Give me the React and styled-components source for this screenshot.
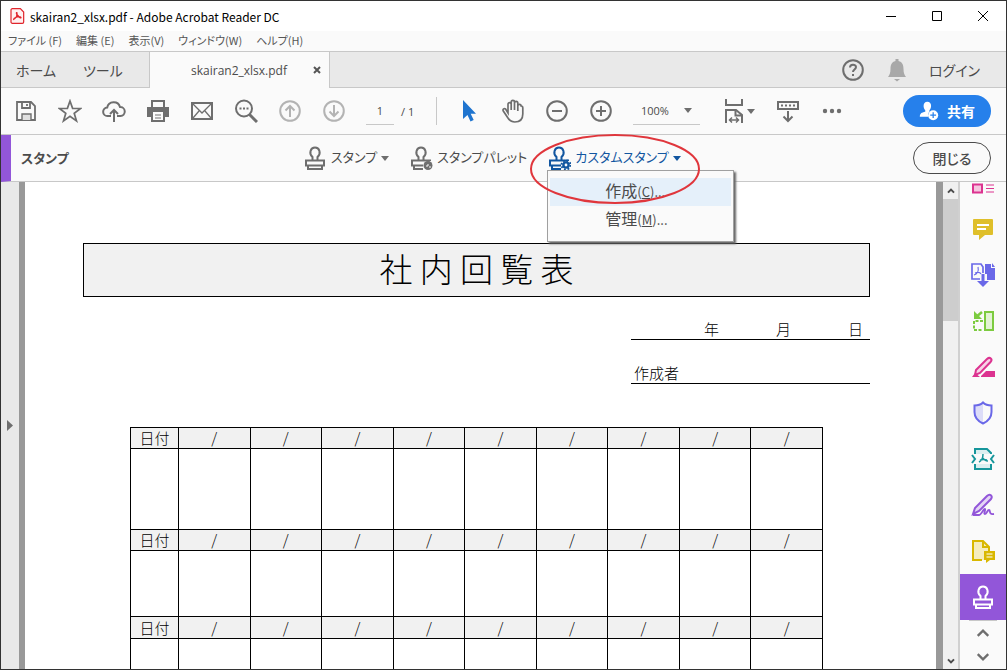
import styled, { createGlobalStyle } from "styled-components";

const GlobalStyle = createGlobalStyle`
  * {
    box-sizing: border-box;
  }

  body {
    margin: 0;
    color: #4b4b4b;
    font-family: "Noto Sans CJK JP", sans-serif;
    font-size: 12px;
    font-feature-settings: "palt";
  }

  button, input, select {
    margin: 0;
    padding: 0;
    border: 0;
    background: none;
    color: inherit;
    font: inherit;
    font-feature-settings: inherit;
  }

  svg {
    display: block;
    flex: none;
  }
`;

const Window = styled.div`
  display: flex;
  flex-direction: column;
  height: 100vh;
  border: 1px solid #333;
  background: #fafafa;
  overflow: hidden;
`;

const TitleBar = styled.header`
  display: flex;
  flex: none;
  align-items: center;
  height: 30px;
  padding: 0 0 0 8px;
  background: #fff;
  color: #000;
`;

const TitleText = styled.h1`
  flex: 1;
  margin: 0 0 0 5px;
  font-size: 12px;
  font-weight: 400;
`;

const WindowButton = styled.button`
  display: flex;
  align-items: center;
  justify-content: center;
  width: 46px;
  height: 30px;
`;

const MenuBar = styled.nav`
  display: flex;
  flex: none;
  align-items: center;
  gap: 14px;
  height: 20px;
  padding: 0 7px 2px;
  color: #555;
  font-size: 11px;
`;

const TabBar = styled.div`
  display: flex;
  flex: none;
  height: 37px;
  border-top: 1px solid #c8c8c8;
  background: #e9e9e9;
`;

const TabGroup = styled.div`
  display: flex;
  align-items: center;
  gap: ${({ $gap }) => $gap}px;
  width: ${({ $width }) => $width};
  flex: ${({ $grow }) => ($grow ? 1 : "none")};
  justify-content: ${({ $grow }) => ($grow ? "flex-end" : "flex-start")};
  padding: 0 ${({ $grow }) => ($grow ? 26 : 15)}px;
  border-bottom: 1px solid #c8c8c8;
  font-size: 14px;

  svg {
    color: #6e6e6e;
  }
`;

const FileTab = styled.div`
  display: flex;
  align-items: center;
  width: 181px;
  padding: 0 8px 0 41px;
  border: solid #c8c8c8;
  border-width: 0 1px;
  background: #fafafa;
  font-family: "Open Sans", sans-serif;

  button:first-child {
    flex: 1;
    text-align: left;
  }
`;

const Toolbar = styled.div`
  display: flex;
  flex: none;
  align-items: center;
  height: 47px;
  padding: 0 15px 0 3px;
  border-bottom: 1px solid #c8c8c8;
`;

const ToolButton = styled.button`
  display: flex;
  align-items: center;
  justify-content: center;
  gap: 1px;
  width: ${({ $wide }) => ($wide ? 56 : 44)}px;
  height: 44px;
  color: ${({ $color }) => $color || "#6e6e6e"};

  &:disabled {
    color: #b3b3b3;
  }
`;

const PageBox = styled.div`
  display: flex;
  align-items: center;
  gap: 7px;
  height: 28px;
  width: 71px;
  margin: 0 10px;
  border-right: 1px solid #c8c8c8;
  font-family: "Open Sans", sans-serif;
  font-size: 11px;

  input {
    width: 28px;
    height: 28px;
    border-bottom: 1px solid #c8c8c8;
    text-align: center;
  }
`;

const ZoomBox = styled.label`
  display: flex;
  align-items: center;
  width: 67px;
  height: 28px;
  margin: 0 10px;
  padding: 0 8px;
  border-bottom: 1px solid #c8c8c8;
  font-family: "Open Sans", sans-serif;
  font-size: 11px;

  select {
    flex: 1;
    min-width: 0;
    appearance: none;
  }

  svg {
    color: #6e6e6e;
  }
`;

const PillButton = styled.button`
  display: flex;
  align-items: center;
  justify-content: center;
  gap: 8px;
  width: ${({ $primary }) => ($primary ? 88 : 78)}px;
  height: 32px;
  margin-left: auto;
  border: ${({ $primary }) => ($primary ? "0" : "1px solid #4b4b4b")};
  border-radius: 16px;
  background: ${({ $primary }) => ($primary ? "#2680eb" : "transparent")};
  color: ${({ $primary }) => ($primary ? "#fff" : "#4b4b4b")};
  font-size: 14px;
  font-weight: ${({ $primary }) => ($primary ? 700 : 500)};
`;

const StampBar = styled.div`
  display: flex;
  flex: none;
  align-items: center;
  height: 47px;
  padding-right: 15px;
  border-bottom: 1px solid #c8c8c8;
  border-left: 10px solid #9256d9;
`;

const StampTitle = styled.h2`
  width: 292px;
  margin: 0;
  padding: 0 0 2px 10px;
  font-size: 13px;
  font-weight: 700;
`;

const StampTools = styled.div`
  display: flex;
  align-items: center;
  gap: 20px;
`;

const StampButton = styled.button`
  display: flex;
  align-items: center;
  gap: 4px;
  height: 32px;
  color: ${({ $open }) => ($open ? "#1256a0" : "#4b4b4b")};
  font-size: 13px;
  white-space: nowrap;

  svg {
    color: ${({ $open }) => ($open ? "#1256a0" : "#6e6e6e")};
  }
`;

const StampLabel = styled.span`
  padding-bottom: 3px;
`;

const MenuAnchor = styled.div`
  position: relative;
`;

const DropMenu = styled.div`
  position: absolute;
  top: 28px;
  left: 0;
  z-index: 1;
  width: 187px;
  padding: 7px 2px;
  border: 1px solid #a0a0a0;
  background: #fafafa;
  box-shadow: 2px 2px 2px #666;
`;

const DropItem = styled.button`
  display: block;
  width: 100%;
  height: 28px;
  padding: 0 0 3px 55px;
  background: ${({ $active }) => ($active ? "#e5f0fa" : "transparent")};
  font-size: 16px;
  line-height: 25px;
  text-align: left;

  small {
    font-size: 13px;
  }
`;

const Highlight = styled.svg`
  position: absolute;
  top: -8px;
  left: -18px;
  z-index: 2;
  pointer-events: none;
`;

const Workspace = styled.div`
  display: flex;
  flex: 1;
  min-height: 0;
`;

const PaneToggle = styled.button`
  display: flex;
  flex: none;
  align-items: center;
  justify-content: center;
  width: 18px;
  background: #e9e9e9;
`;

const Canvas = styled.main`
  flex: 1;
  min-width: 0;
  border: solid #999;
  border-width: 0 7px 0 6px;
  background: #fff;
  overflow: hidden;
`;

const Paper = styled.article`
  padding: 61px 66px 0 58px;
  color: #000;
  font-weight: 300;
  font-size: 15px;
  line-height: 20px;
`;

const PaperTitle = styled.h3`
  margin: 0;
  padding-bottom: 4px;
  border: 1px solid #000;
  background: #f1f1f1;
  font-size: 33px;
  font-weight: 300;
  line-height: 48px;
  text-align: center;
`;

const SignLine = styled.div`
  display: flex;
  justify-content: ${({ $end }) => ($end ? "flex-end" : "flex-start")};
  gap: 57px;
  width: 239px;
  margin: ${({ $end }) => ($end ? 22 : 23)}px 0 0 auto;
  padding: 0 7px 0 3px;
  border-bottom: 1px solid #000;
`;

const Table = styled.table`
  width: calc(100% - 94px);
  margin: 43px 47px 0;
  border-collapse: collapse;
  table-layout: fixed;

  th, td {
    padding: 0;
    border: 1px solid #000;
    font-weight: 300;
    line-height: 18px;
    text-align: center;
  }

  th {
    background: #f1f1f1;
  }

  th:first-child {
    width: 48px;
  }
`;

const Row = styled.tr`
  height: ${({ $height }) => $height}px;
`;

const ScrollBar = styled.div`
  display: flex;
  flex: none;
  flex-direction: column;
  align-items: center;
  justify-content: space-between;
  width: 15px;
  background: #f0f0f0;
`;

const ScrollArrow = styled.button`
  display: flex;
  align-items: center;
  justify-content: center;
  width: 15px;
  height: 17px;
`;

const Thumb = styled.div`
  width: 15px;
  height: 25%;
  margin-bottom: auto;
  background: #cdcdcd;
`;

const SidePanel = styled.aside`
  display: flex;
  flex: none;
  flex-direction: column;
  width: 48px;
  border-left: 2px solid #d0d0d0;
`;

const SideButton = styled.button`
  display: flex;
  flex: none;
  align-items: center;
  justify-content: center;
  height: ${({ $size }) => $size || 46}px;
  background: ${({ $active }) => ($active ? "#9256d9" : "transparent")};
  color: ${({ $active }) => ($active ? "#fff" : "#6e6e6e")};
`;

const SideRule = styled.hr`
  width: 28px;
  margin: 0 auto;
  border: 0;
  border-top: 1px solid #c8c8c8;
`;

const Icon = ({ size = 24, width = 2, children }) => (
  <svg
    width={size}
    height={size}
    viewBox="0 0 24 24"
    fill="none"
    stroke="currentColor"
    strokeWidth={width}
    aria-hidden="true"
  >
    {children}
  </svg>
);

const Caret = () => (
  <svg width="8" height="5" viewBox="0 0 8 5" aria-hidden="true">
    <path d="M0 0h8L4 5z" fill="currentColor" />
  </svg>
);

const Chevron = ({ up, size = 14, width = 3 }) => (
  <Icon size={size} width={width}>
    <path d={up ? "M3 17l9-9 9 9" : "M3 7l9 9 9-9"} />
  </Icon>
);

const SaveIcon = () => (
  <Icon width={1.8}>
    <path d="M3 3h14l4 4v14H3z" />
    <path d="M8 3v6h8V3" />
    <path d="M8 21v-6h9v6" fill="#e0e0e0" strokeWidth="1.4" />
    <path d="M13 5v2" />
  </Icon>
);

const StarIcon = () => (
  <Icon width={1.7}>
    <path d="M12 2l2.6 7.4 7.9.1-6.3 4.8 2.3 7.6-6.5-4.6-6.5 4.6 2.3-7.6-6.3-4.8 7.9-.1z" />
  </Icon>
);

const CloudIcon = () => (
  <Icon>
    <path d="M9 17H5.5a4.2 4.2 0 0 1-.3-8.4A6.6 6.6 0 0 1 18 8a4.5 4.5 0 0 1 .5 9H15" />
    <path d="M12 23V11M8 15l4-4 4 4" />
  </Icon>
);

const PrintIcon = () => (
  <Icon>
    <path d="M6 8V2h12v6" />
    <path d="M1 8h22v10h-4v-5H5v5H1z" fill="currentColor" stroke="none" />
    <path d="M6 13v9h12v-9" />
    <path d="M9 16h6M9 19h6" strokeWidth="1" />
  </Icon>
);

const MailIcon = () => (
  <Icon>
    <path d="M2 4h20v16H2z" />
    <path d="M3 5l9 9 9-9M3 19l6-7M21 19l-6-7" strokeWidth="1.3" />
  </Icon>
);

const SearchIcon = () => (
  <Icon>
    <circle cx="10" cy="9.5" r="8" />
    <path d="M15.5 15.5L23 23" strokeWidth="3" />
    <path d="M5.5 9.5h9" strokeDasharray="2 1.5" />
  </Icon>
);

const CircleIcon = ({ d }) => (
  <Icon>
    <circle cx="12" cy="12" r="9.8" />
    <path d={d} />
  </Icon>
);

const CursorIcon = () => (
  <Icon>
    <path d="M6 1v19l4.5-4 3 6.5 3.2-1.5-3-6.2H19z" fill="currentColor" stroke="none" />
  </Icon>
);

const HandIcon = () => (
  <Icon width={1.7}>
    <path d="M7 14V5.2a1.6 1.6 0 0 1 3.2 0V11 3a1.6 1.6 0 0 1 3.3 0v8-7a1.6 1.6 0 0 1 3.3 0v8-5a1.6 1.6 0 0 1 3.3 0c1.5 0 1.7 1 1.7 2v6c0 5-3 8-8 8-4 0-5.800-2-7.500-5l-4-6c-1-2 1-3 2.300-2z" />
  </Icon>
);

const FitIcon = () => (
  <Icon>
    <path d="M4 0v6h16V0M4 24V11h10l6 5v8" />
    <path d="M13.5 11v5.5H20" />
    <path d="M7 21h10M10 18.5L7.500 21l2.500 2.500M14 18.500l2.500 2.500-2.500 2.500" strokeWidth="1.5" />
  </Icon>
);

const KeyboardIcon = () => (
  <Icon>
    <path d="M2 3h20v7H2z" />
    <path d="M5 6.500h14" strokeDasharray="2 2" />
    <path d="M12 12v9M7.500 17.500L12 22l4.500-4.500" />
  </Icon>
);

const DotsIcon = () => (
  <Icon>
    <g fill="currentColor" stroke="none">
      <circle cx="5" cy="12" r="2.2" />
      <circle cx="12" cy="12" r="2.2" />
      <circle cx="19" cy="12" r="2.2" />
    </g>
  </Icon>
);

const ShareIcon = () => (
  <Icon size={20}>
    <path
      d="M10 1c3 0 4.500 2 4.500 5 0 2-1 4-2 5v2c-2 2-2 4-1 6H1c0-4 2-5 6.500-6v-2c-1-1-2-3-2-5 0-3 1.500-5 4.500-5z"
      fill="currentColor"
      stroke="none"
    />
    <circle cx="17" cy="17" r="6" fill="currentColor" stroke="none" />
    <path d="M17 13.500v7M13.500 17h7" stroke="#2680eb" strokeWidth="1.5" />
  </Icon>
);

const StampIcon = ({ badge }) => (
  <Icon>
    <path d="M9.500 14.500V11C5.500 7.500 7.500 1.500 12 1.500s6.500 6 2.500 9.500v3.500" />
    {!badge && <path d="M3 14.500h18v5H3zM5 19.500h14V23H5z" />}
    {badge && <path d="M21 15v-.5H3v5h11M5 20v3h9" />}
    {badge === "palette" && (
      <g fill="currentColor" stroke="none">
        <circle cx="19" cy="19.5" r="4.5" />
        <path d="M17 20h2v-2M20 21h2" stroke="#fafafa" strokeWidth="1" />
      </g>
    )}
    {badge === "gear" && (
      <>
        <circle cx="19" cy="19" r="2.6" strokeWidth="2.4" />
        <circle cx="19" cy="19" r="4.5" strokeDasharray="1.77" />
      </>
    )}
  </Icon>
);

const BellIcon = () => (
  <Icon>
    <path
      d="M10.500 1h3v2c4 1 5 4 5 8 0 4 1 6 2.500 8H3c1.500-2 2.500-4 2.500-8 0-4 1-7 5-8zM9 21h6l-3 2.500z"
      fill="#a8a8a8"
      stroke="none"
    />
  </Icon>
);

const PdfIcon = () => (
  <Icon size={16} width={1.8}>
    <g stroke="#e0252c">
      <path d="M5 1h12l5 5v15a2 2 0 0 1-2 2H5a2 2 0 0 1-2-2V3a2 2 0 0 1 2-2z" fill="#fff1f1" />
      <path d="M7 17c3-1 6-6 5-10-2-1-1 5 5 8 2 0 1-2-2-2-3 0-8 2-8 4z" />
    </g>
  </Icon>
);

const ThumbsIcon = () => (
  <Icon>
    <g stroke="#dc3390">
      <path d="M2 2.500h9v8H2z" fill="#f4c6df" />
      <path d="M15 3h8M15 6.500h8M15 10h8" strokeWidth="1.2" />
    </g>
  </Icon>
);

const CommentIcon = () => (
  <Icon>
    <path
      d="M3 2h18a1 1 0 0 1 1 1v14a1 1 0 0 1-1 1h-7l-6 5v-5H3a1 1 0 0 1-1-1V3a1 1 0 0 1 1-1z"
      fill="#dfbf2a"
      stroke="none"
    />
    <path d="M6 8h12M6 12h9" stroke="#fff" strokeWidth="1.8" />
  </Icon>
);

const ExportIcon = () => (
  <Icon>
    <g stroke="#6a68e8">
      <path d="M9 16H1V1h9l2 3v6" strokeWidth="1.7" />
      <path d="M3 12c3-1 5-4 4-8M4 10c3-1 5-1 6 1" strokeWidth="1.2" />
      <path d="M14 1h6v4h4v12h-8v-6h-2z" fill="#6a68e8" stroke="none" />
      <path d="M21 0l3 4h-3z" fill="#6a68e8" stroke="none" />
      <path d="M12 11v8" strokeWidth="3" />
      <path d="M6 18h12l-6 6z" fill="#6a68e8" stroke="none" />
    </g>
  </Icon>
);

const OrganizeIcon = () => (
  <Icon>
    <g stroke="#7ccb3f">
      <path d="M14 3h8v18h-8z" fill="#e2f3d4" />
      <path d="M12 12H3v9h9" strokeDasharray="3 1.5" />
      <path d="M11 3L5 8" strokeWidth="2.5" />
      <path d="M3 2v8h8z" fill="#7ccb3f" stroke="none" />
    </g>
  </Icon>
);

const RedactIcon = () => (
  <Icon>
    <path d="M10 21l5-5h9v6H10zM1 22l3-4 5 4z" fill="#dc3390" stroke="none" />
    <path d="M5 15L16 4c3-2.500 6 0 3.500 3L9 18l-5 2z" fill="#f8d3e7" stroke="#dc3390" />
  </Icon>
);

const ShieldIcon = () => (
  <Icon>
    <path d="M12 2v20c-5-2-8-6-8-11V4.500C8 4.500 10 3 12 1z" fill="#dcdcf8" stroke="none" />
    <path
      d="M12 1.500c2 2 5 3 8.500 3V11c0 5-3 9-8.500 11.500C6.500 20 3.500 16 3.500 11V4.500c3.500 0 6.500-1 8.500-3z"
      stroke="#6a68e8"
    />
  </Icon>
);

const CompressIcon = () => (
  <Icon>
    <g stroke="#16969b">
      <path d="M4 7V2h12l4 4v1M4 17v5h16v-5" fill="#dceff0" />
      <path d="M1 8l3 4-3 4M23 8l-3 4 3 4" />
      <path d="M12 7c0 4-2 7-4 8M12 11c1 2 2 3 5 3M9 13c3-1 4-1 7 0" strokeWidth="1.5" />
    </g>
  </Icon>
);

const SignIcon = () => (
  <Icon>
    <path d="M2 21l2-6L16 3c3-3 6 0 4 3L8 18l-6 3z" fill="#e4d5f6" stroke="#9256d9" />
    <path d="M2 22h6c2 0 5-7 6-6 1 1-2 5 0 5s2-4 4-4-1 5 5 4" stroke="#9256d9" strokeWidth="1.8" />
  </Icon>
);

const NoteFileIcon = () => (
  <Icon>
    <path d="M2 2h10l6 6v4h-5v9H2z" fill="#f5edbe" stroke="none" />
    <path d="M11 21H2V2h10l6 6v4M12 2v6h6" stroke="#d9b800" />
    <path d="M13 12h11v9h-5l-4 3v-3h-2z" fill="#d9b800" stroke="none" />
    <path d="M15.500 15h6M15.500 18h6" stroke="#fff" strokeWidth="1.2" />
  </Icon>
);

const menus = ["ファイル (F)", "編集 (E)", "表示(V)", "ウィンドウ(W)", "ヘルプ(H)"];

const fileTools = [
  { label: "保存", icon: <SaveIcon /> },
  { label: "お気に入り", icon: <StarIcon /> },
  { label: "アップロード", icon: <CloudIcon /> },
  { label: "印刷", icon: <PrintIcon /> },
  { label: "メール", icon: <MailIcon /> },
  { label: "検索", icon: <SearchIcon /> },
  { label: "前のページ", icon: <CircleIcon d="M12 18V7M7.500 11.500L12 7l4.500 4.500" />, disabled: true },
  { label: "次のページ", icon: <CircleIcon d="M12 6v11M7.500 12.500L12 17l4.500-4.500" />, disabled: true },
];

const viewTools = [
  { label: "選択", icon: <CursorIcon />, color: "#1f74cf" },
  { label: "手のひら", icon: <HandIcon /> },
  { label: "縮小", icon: <CircleIcon d="M7 12h10" /> },
  { label: "拡大", icon: <CircleIcon d="M7 12h10M12 7v10" /> },
];

const sideTools = [
  { label: "ページ", icon: <ThumbsIcon />, size: 24 },
  { label: "注釈", icon: <CommentIcon /> },
  { label: "書き出し", icon: <ExportIcon /> },
  { label: "整理", icon: <OrganizeIcon /> },
  { label: "墨消し", icon: <RedactIcon /> },
  { label: "保護", icon: <ShieldIcon /> },
  { label: "圧縮", icon: <CompressIcon /> },
  { label: "署名", icon: <SignIcon /> },
  { label: "レビュー", icon: <NoteFileIcon /> },
  { label: "スタンプ", icon: <StampIcon />, active: true },
];

const rows = [
  { head: 21, body: 81 },
  { head: 21, body: 66 },
  { head: 22, body: 81 },
];

const days = Array.from({ length: 9 }, (_, i) => i);

const Circulation = () => (
  <Paper>
    <PaperTitle>社 内 回 覧 表</PaperTitle>
    <SignLine $end>
      <span>年</span>
      <span>月</span>
      <span>日</span>
    </SignLine>
    <SignLine>作成者</SignLine>
    <Table>
      <tbody>
        {rows.map((row, i) => [
          <Row key={`head${i}`} $height={row.head}>
            <th scope="row">日付</th>
            {days.map((day) => (
              <th key={day}>/</th>
            ))}
          </Row>,
          <Row key={`body${i}`} $height={row.body}>
            <td />
            {days.map((day) => (
              <td key={day} />
            ))}
          </Row>,
        ])}
      </tbody>
    </Table>
  </Paper>
);

const App = () => {
  return (
    <Window>
      <GlobalStyle />

      <TitleBar>
        <PdfIcon />
        <TitleText>skairan2_xlsx.pdf - Adobe Acrobat Reader DC</TitleText>
        <WindowButton aria-label="最小化">
          <svg width="10" height="10"><path d="M0 5.500h10" stroke="#000" /></svg>
        </WindowButton>
        <WindowButton aria-label="最大化">
          <svg width="10" height="10"><path d="M.5.5h9v9h-9z" fill="none" stroke="#000" /></svg>
        </WindowButton>
        <WindowButton aria-label="ウィンドウを閉じる">
          <svg width="10" height="10"><path d="M0 0l10 10M10 0L0 10" stroke="#000" /></svg>
        </WindowButton>
      </TitleBar>

      <MenuBar>
        {menus.map((menu) => (
          <button key={menu}>{menu}</button>
        ))}
      </MenuBar>

      <TabBar>
        <TabGroup $width="148px" $gap={27}>
          <button>ホーム</button>
          <button>ツール</button>
        </TabGroup>
        <FileTab>
          <button>skairan2_xlsx.pdf</button>
          <button aria-label="タブを閉じる">
            <svg width="8" height="8"><path d="M1 1l6 6M7 1L1 7" stroke="#555" strokeWidth="2" /></svg>
          </button>
        </FileTab>
        <TabGroup $grow $gap={20}>
          <button aria-label="ヘルプ">
            <CircleIcon d="M9 9.500c0-3.500 6-3.500 6-.5 0 2.500-3 2.500-3 5M12 16v2" />
          </button>
          <button aria-label="通知"><BellIcon /></button>
          <button>ログイン</button>
        </TabGroup>
      </TabBar>

      <Toolbar>
        {fileTools.map(({ label, icon, disabled }) => (
          <ToolButton key={label} aria-label={label} disabled={disabled}>{icon}</ToolButton>
        ))}
        <PageBox>
          <input type="text" defaultValue="1" aria-label="ページ番号" />
          <span>/ 1</span>
        </PageBox>
        {viewTools.map(({ label, icon, color }) => (
          <ToolButton key={label} aria-label={label} $color={color}>{icon}</ToolButton>
        ))}
        <ZoomBox>
          <select aria-label="表示倍率">
            <option>100%</option>
          </select>
          <Caret />
        </ZoomBox>
        <ToolButton $wide aria-label="ページに合わせる"><FitIcon /><Caret /></ToolButton>
        <ToolButton aria-label="ツールバーの位置"><KeyboardIcon /></ToolButton>
        <ToolButton aria-label="その他"><DotsIcon /></ToolButton>
        <PillButton $primary><ShareIcon />共有</PillButton>
      </Toolbar>

      <StampBar>
        <StampTitle>スタンプ</StampTitle>
        <StampTools>
          <StampButton>
            <StampIcon />
            <StampLabel>スタンプ</StampLabel>
            <Caret />
          </StampButton>
          <StampButton>
            <StampIcon badge="palette" />
            <StampLabel>スタンプパレット</StampLabel>
          </StampButton>
          <MenuAnchor>
            <StampButton $open>
              <StampIcon badge="gear" />
              <StampLabel>カスタムスタンプ</StampLabel>
              <Caret />
            </StampButton>
            <DropMenu>
              <DropItem $active>作成<small>(<u>C</u>)...</small></DropItem>
              <DropItem>管理<small>(<u>M</u>)...</small></DropItem>
            </DropMenu>
            <Highlight width="172" height="70" aria-hidden="true">
              <ellipse cx="86" cy="35" rx="84" ry="34" fill="none" stroke="#e0363c" strokeWidth="2" />
            </Highlight>
          </MenuAnchor>
        </StampTools>
        <PillButton>閉じる</PillButton>
      </StampBar>

      <Workspace>
        <PaneToggle aria-label="ナビゲーションパネル">
          <svg width="6" height="11"><path d="M0 0l6 5.500L0 11z" fill="#6e6e6e" /></svg>
        </PaneToggle>
        <Canvas>
          <Circulation />
        </Canvas>
        <ScrollBar>
          <ScrollArrow aria-label="上へ"><Chevron up size={8} width={6} /></ScrollArrow>
          <Thumb />
          <ScrollArrow aria-label="下へ"><Chevron size={8} width={6} /></ScrollArrow>
        </ScrollBar>
        <SidePanel>
          {sideTools.map(({ label, icon, size, active }) => (
            <SideButton key={label} aria-label={label} $size={size} $active={active}>{icon}</SideButton>
          ))}
          <SideRule />
          <SideButton $size={24} aria-label="前のツール"><Chevron up size={14} width={4} /></SideButton>
          <SideButton $size={24} aria-label="次のツール"><Chevron size={14} width={4} /></SideButton>
        </SidePanel>
      </Workspace>
    </Window>
  );
};

export default App;
